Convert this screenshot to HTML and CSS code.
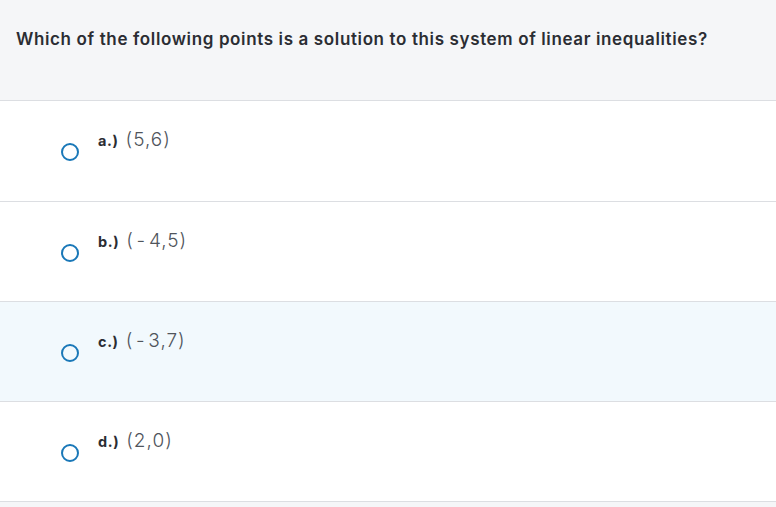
FILE: index.html
```html
<!DOCTYPE html>
<html>
<head>
<meta charset="utf-8">
<link rel="stylesheet" href="styles.css">
</head>
<body>
<div class="page">
  <div class="question">Which of the following points is a solution to this system of linear inequalities?</div>
  <div class="options">
    <div class="option first">
      <span class="radio"></span>
      <span class="label">a.)</span>
      <span class="value">(5,6)</span>
    </div>
    <div class="option">
      <span class="radio"></span>
      <span class="label">b.)</span>
      <span class="value">(&#8202;-&#8202;4,5)</span>
    </div>
    <div class="option hover">
      <span class="radio"></span>
      <span class="label">c.)</span>
      <span class="value">(&#8202;-&#8202;3,7)</span>
    </div>
    <div class="option">
      <span class="radio"></span>
      <span class="label">d.)</span>
      <span class="value">(2,0)</span>
    </div>
  </div>
</div>
</body>
</html>
```
FILE: styles.css
```css
html, body {
  margin: 0;
  padding: 0;
  background: #f5f6f8;
}
.page {
  width: 776px;
  font-family: Inter, "Open Sans", sans-serif;
}
.question {
  height: 101px;
  box-sizing: border-box;
  padding: 29px 0 0 16px;
  font-size: 17px;
  line-height: 20px;
  font-weight: 600;
  letter-spacing: 0.63px;
  color: #2b2d33;
  border-bottom: 1px solid #dcdee2;
  background: #f5f6f8;
}
.option {
  height: 100px;
  box-sizing: border-box;
  border-bottom: 1px solid #dcdee2;
  background: #ffffff;
  display: flex;
  align-items: flex-start;
  padding: 29px 0 0 61px;
}
.option.first {
  height: 101px;
}
.option.hover {
  background: #f2f9fd;
}
.radio {
  width: 18px;
  height: 18px;
  box-sizing: border-box;
  border: 2.5px solid #1a78b8;
  border-radius: 50%;
  margin-top: 13px;
  margin-right: 19px;
  flex: none;
}
.label {
  font-size: 14.5px;
  font-weight: 700;
  letter-spacing: 0.6px;
  color: #2b2d33;
  margin-top: 1px;
  margin-right: 7px;
  line-height: 20px;
}
.value {
  font-size: 19px;
  font-weight: 300;
  color: #50555c;
  line-height: 20px;
  letter-spacing: 1px;
}
```
